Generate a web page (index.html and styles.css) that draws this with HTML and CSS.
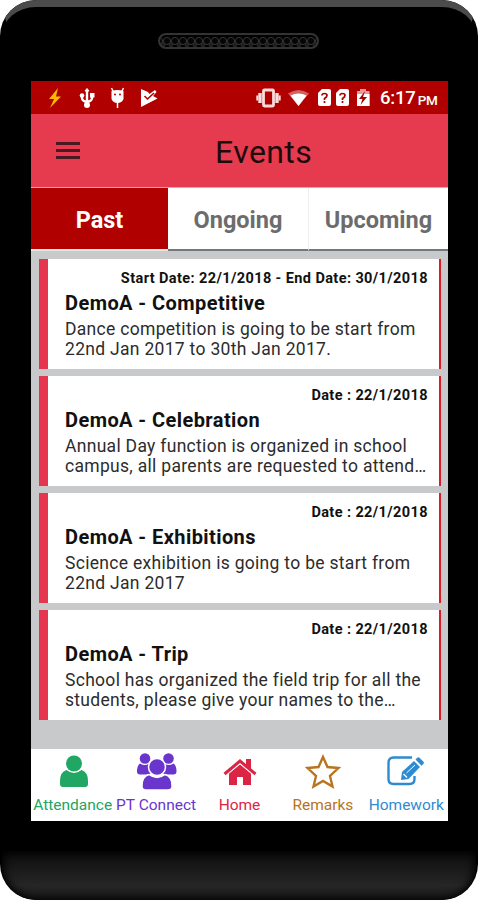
FILE: index.html
```html
<!DOCTYPE html>
<html lang="en">

<head>
    <meta charset="UTF-8">
    <meta name="viewport" content="width=device-width, initial-scale=1.0">
    <title>Events</title>
    <link rel="stylesheet" href="styles.css">
</head>

<body>
    <div class="phone">
        <div class="phone_top">
            <svg class="speaker" width="162" height="16" viewBox="0 0 162 16">
                <defs>
                    <pattern id="mesh" width="8" height="16" patternUnits="userSpaceOnUse" x="5" y="0">
                        <circle cx="4" cy="8" r="3.6" fill="#060606" stroke="#333" stroke-width="1" />
                        <circle cx="0" cy="12" r="2" fill="#1d1d1d" stroke="#333" stroke-width=".6" />
                        <circle cx="8" cy="12" r="2" fill="#1d1d1d" stroke="#333" stroke-width=".6" />
                    </pattern>
                </defs>
                <rect x="1" y="1" width="159" height="14" rx="7" fill="url(#mesh)" stroke="#333" stroke-width="2" />
            </svg>
        </div>

        <div class="screen">
            <div class="status_bar">
                <svg class="status_left" width="120" height="24" viewBox="0 0 120 24">
                    <path d="M12 2L3 13h5l-4 9L15 10.500h-5z" fill="#ffb800" />
                    <g fill="none" stroke="#fff" stroke-width="2.400">
                        <path d="M41 5v15M36 9v3q0 3 5 4M46 9v3q0 3-5 4" />
                        <path d="M39 5l2-2.500L43 5z" fill="#fff" stroke-width="1" />
                    </g>
                    <g fill="#fff">
                        <circle cx="36" cy="9.500" r="2.300" />
                        <rect x="44" y="7" width="4.500" height="4.500" />
                        <circle cx="41" cy="19" r="3" />
                        <path d="M65.500 5q6-2 12 0v8q-1.500 4-6 4t-6-4z" />
                        <path d="M65.500 2l2 4M77.500 2l-2 4M71.500 16v6" stroke="#fff" stroke-width="1.500" />
                        <path d="M95 3l7 3 1.500 2L109 4l1.500 2-3.500 4 4.500 2.500L95 21z" />
                    </g>
                    <circle cx="69" cy="8.500" r="1" fill="#b00000" />
                    <circle cx="74" cy="8.500" r="1" fill="#b00000" />
                    <path d="M98.500 10l3 3L108 7" fill="none" stroke="#b00000" stroke-width="1.600" />
                </svg>
                <svg class="status_right" width="116" height="24" viewBox="0 0 116 24">
                    <g fill="none" stroke="#fbdcdc">
                        <rect x="7.500" y="4" width="10" height="16" rx="1" stroke-width="2.800" />
                        <path d="M4 7v10M21 7v10" stroke-width="3.400" />
                        <path d="M1.300 9.500v5M23.700 9.500v5" stroke-width="2" />
                    </g>
                    <path d="M32 7.500q10.500-7 21 0L42.500 20z" fill="#d56060" />
                    <path d="M34.500 9.500q8-4 16 0l-8 10.500z" fill="#fff" />
                    <g fill="#fff">
                        <path d="M66 3h7q2 0 2 2v13q0 2-2 2H64q-2 0-2-2V7z" />
                        <path d="M84 3h7q2 0 2 2v13q0 2-2 2h-9q-2 0-2-2V7z" />
                        <path d="M101 5h3V3h6v2h3.500v15H101z" fill="#e89a9a" />
                        <path d="M101 8h12.500v12H101z" />
                    </g>
                    <g fill="none" stroke="#a00" stroke-width="1.700">
                        <path d="M66 9.500q0-2 2.500-2t2.500 2q0 1.500-2.500 3v1.500M68.500 15v2" />
                        <path d="M84 9.500q0-2 2.500-2t2.500 2q0 1.500-2.500 3v1.500M86.500 15v2" />
                    </g>
                    <path d="M109 5l-6 8h3.500l-2 6 6.500-8h-4z" fill="#a00" />
                </svg>
                <span class="time">6:17</span>
                <span class="meridiem">PM</span>
            </div>

            <div class="header">
                <div class="menu_btn">
                    <span></span>
                    <span></span>
                    <span></span>
                </div>
                <h1>Events</h1>
            </div>

            <div class="tabs">
                <div class="tab active"><span>Past</span></div>
                <div class="tab ongoing"><span>Ongoing</span></div>
                <div class="tab upcoming"><span>Upcoming</span></div>
            </div>

            <div class="events">
                <div class="card">
                    <p class="date">Start Date: 22/1/2018 - End Date: 30/1/2018</p>
                    <h2>DemoA - Competitive</h2>
                    <p class="desc">Dance competition is going to be start from<br>22nd Jan 2017 to 30th Jan 2017.</p>
                </div>
                <div class="card">
                    <p class="date">Date : 22/1/2018</p>
                    <h2>DemoA - Celebration</h2>
                    <p class="desc">Annual Day function is organized in school<br>campus, all parents are requested to attend…</p>
                </div>
                <div class="card">
                    <p class="date">Date : 22/1/2018</p>
                    <h2>DemoA - Exhibitions</h2>
                    <p class="desc">Science exhibition is going to be start from<br>22nd Jan 2017</p>
                </div>
                <div class="card">
                    <p class="date">Date : 22/1/2018</p>
                    <h2>DemoA - Trip</h2>
                    <p class="desc">School has organized the field trip for all the<br>students, please give your names to the…</p>
                </div>
            </div>

            <div class="nav">
                <div class="nav_item attendance">
                    <svg width="42" height="40" viewBox="0 0 42 40">
                        <circle cx="22" cy="12.500" r="8" />
                        <path d="M14.500 19q7.500 6 15 0 6.500 2 6.500 11v3q0 3-3 3H11q-3 0-3-3v-3q0-9 6.500-11z" />
                    </svg>
                    <span>Attendance</span>
                </div>
                <div class="nav_item connect">
                    <svg width="42" height="40" viewBox="0 0 42 40">
                        <circle cx="10" cy="7.500" r="5.300" />
                        <circle cx="33.500" cy="7.500" r="5.300" />
                        <path d="M5 12.500q5 3 9 0l3 9q-2 2-6 2H5q-3 0-3-3 0-6 3-8zM38.500 12.500q-5 3-9 0l-3 9q2 2 6 2h6q3 0 3-3 0-6-3-8z" />
                        <g stroke="#fff" stroke-width="1.500">
                            <path d="M14 23.500q8 6 16 0 7 2 7 11v1q0 3.500-4 3.500H11q-4 0-4-3.500v-1q0-9 7-11z" />
                            <circle cx="22" cy="16" r="8.500" />
                        </g>
                    </svg>
                    <span>PT Connect</span>
                </div>
                <div class="nav_item home">
                    <svg width="42" height="40" viewBox="0 0 42 40">
                        <path d="M22 13l11 9v12h-8v-8h-6v8h-8V22z" />
                        <path d="M28 8h5v10l-5-4z" />
                        <path d="M6.500 23L22 10l15.500 13" fill="none" stroke="#dc2444" stroke-width="3" />
                        <path d="M9.500 23.500L22 13l12.500 10.500" fill="none" stroke="#fff" stroke-width="1" />
                    </svg>
                    <span>Home</span>
                </div>
                <div class="nav_item remarks">
                    <svg width="42" height="40" viewBox="0 0 42 40">
                        <path d="M21 6l4.500 10 11 1-8.500 8 2.500 10.500-9.500-5.500-9.500 5.500L14 25l-8.500-8 11-1z" fill="none" stroke="#b87420" stroke-width="2.400" />
                    </svg>
                    <span>Remarks</span>
                </div>
                <div class="nav_item homework">
                    <svg width="42" height="40" viewBox="0 0 42 40">
                        <path d="M27 6.500H8.500q-5 0-5 5v16.500q0 5 5 5h16q5 0 5-5V25" fill="none" stroke="#2f8bd0" stroke-width="2.400" />
                        <path d="M16 29l1-8L29 10l6 6-11.500 12z" />
                        <path d="M30.500 8.500l2-2q1-.8 2 .2l4 4q.8 1 0 2l-2 2z" />
                        <path d="M21.500 22l8.500-8" stroke="#fff" stroke-width="1" />
                        <path d="M18.500 23l3.500 3.500" stroke="#fff" stroke-width="1.200" />
                    </svg>
                    <span>Homework</span>
                </div>
            </div>
        </div>

        <div class="phone_bottom"></div>
    </div>
</body>

</html>
```
FILE: styles.css
```css
* {
    margin: 0;
    padding: 0;
    box-sizing: border-box;
}

body {
    background: white;
    font-family: Roboto, sans-serif;
}

.phone {
    width: 478px;
    height: 900px;
    display: flex;
    flex-flow: column;
    align-items: center;
    background: black;
    border-radius: 36px;
    overflow: hidden;
}

.phone_top {
    width: 478px;
    height: 81px;
    flex: none;
    display: flex;
    justify-content: center;
    padding-top: 26px;
    border-top: solid 7px #4b4b4b;
    border-left: solid 2px transparent;
    border-right: solid 2px transparent;
    border-radius: 36px 36px 0 0;
}

.screen {
    width: 417px;
    height: 740px;
    margin-left: 1px;
    flex: none;
    display: flex;
    flex-flow: column;
    background: #c8c9cb;
}

.status_bar {
    height: 33px;
    display: flex;
    align-items: center;
    padding-left: 15px;
    background: #b00000;
    color: white;
}

.status_right {
    margin-left: 90px;
}

.time {
    margin-left: 8px;
    padding-top: 1px;
    font-size: 18.5px;
    font-weight: 500;
    letter-spacing: -.2px;
}

.meridiem {
    margin-left: 2px;
    padding-top: 5px;
    font-size: 13.5px;
    font-weight: 500;
    letter-spacing: -.3px;
}

.header {
    height: 74px;
    display: flex;
    align-items: center;
    padding-left: 25px;
    background: #e63b4e;
    border-bottom: solid 1px #f3a0aa;
}

.menu_btn {
    width: 24px;
    display: flex;
    flex-flow: column;
    gap: 4px;
}

.menu_btn span {
    height: 3px;
    background: #4a1820;
}

.header h1 {
    margin-left: 135px;
    padding-top: 2px;
    font-size: 32px;
    font-weight: normal;
    letter-spacing: .4px;
    color: #1c0a0d;
}

.tabs {
    height: 63px;
    display: flex;
}

.tab {
    width: 140px;
    display: flex;
    justify-content: center;
    align-items: center;
    padding-top: 2px;
    background: white;
    border-bottom: solid 2px #77787a;
    color: #6c6c6c;
    font-size: 23.5px;
    font-weight: bold;
}

.tab.active {
    width: 137px;
    background: #b00000;
    color: white;
    border-bottom-color: #e6e6e6;
}

.tab.upcoming {
    border-left: solid 1px #eee;
}

.events {
    height: 498px;
    display: flex;
    flex-flow: column;
    gap: 7px;
    padding: 8px 7px 0 8px;
}

.card {
    height: 110px;
    padding: 10px 11px 0 17px;
    background: white;
    border-left: solid 9px #e6354e;
    border-right: solid 2px #dc1c24;
    color: #111;
    white-space: nowrap;
}

.card .date {
    line-height: 20px;
    text-align: right;
    font-size: 14.5px;
    font-weight: 700;
    letter-spacing: .4px;
}

.card h2 {
    margin-top: 2px;
    line-height: 24px;
    font-size: 20px;
    font-weight: 700;
    letter-spacing: .42px;
}

.card .desc {
    margin-top: 4px;
    line-height: 20px;
    font-size: 17.5px;
    letter-spacing: .3px;
    color: #2c2c2c;
}

.nav {
    height: 72px;
    display: grid;
    grid-template-columns: repeat(5, 1fr);
    background: white;
}

.nav_item {
    display: flex;
    flex-flow: column;
    align-items: center;
    padding-top: 2px;
    font-size: 15.5px;
    white-space: nowrap;
}

.nav_item span {
    margin-top: 4px;
    line-height: 20px;
}

.nav_item svg {
    fill: currentColor;
}

.attendance {
    color: #22a663;
}

.connect {
    color: #6a35cc;
}

.home {
    color: #dc2444;
}

.remarks {
    color: #b87420;
}

.homework {
    color: #2f8bd0;
}

.phone_bottom {
    width: 474px;
    height: 49px;
    flex: none;
    margin-top: 30px;
    background: linear-gradient(#0c0c0c, #262626 70%, #1c1c1c);
    border-radius: 0 0 34px 34px;
    box-shadow: inset 0 0 8px 2px black;
}
```
